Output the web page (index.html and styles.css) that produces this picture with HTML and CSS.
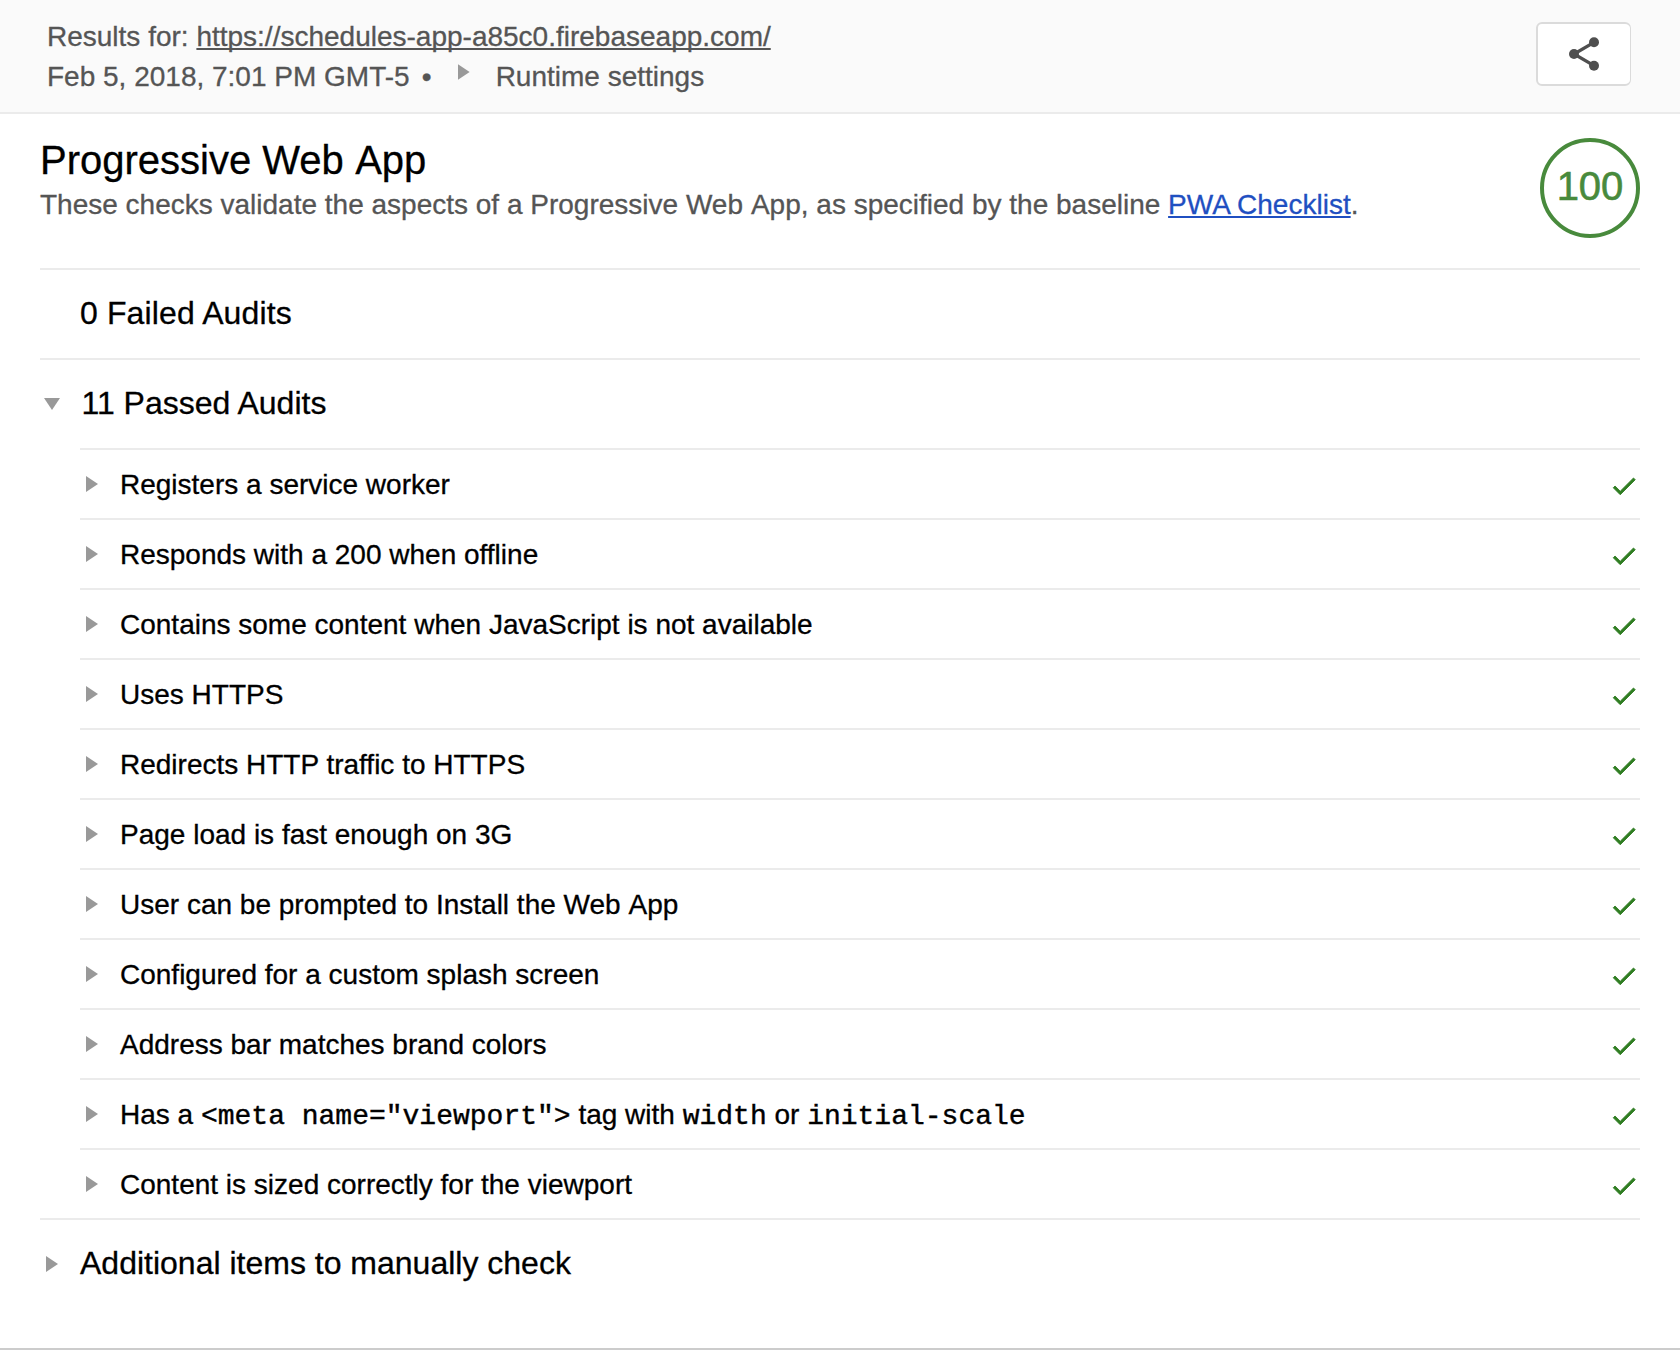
FILE: index.html
```html
<!DOCTYPE html>
<html lang="en">
<head>
<meta charset="utf-8">
<title>Audit report</title>
<link rel="stylesheet" href="styles.css">
</head>
<body>
<svg class="defs" width="0" height="0" aria-hidden="true">
  <symbol id="check" viewBox="0 0 24 24"><path d="M9 16.17L4.83 12l-1.42 1.41L9 19 21 7l-1.41-1.41z"/></symbol>
</svg>
<header class="header">
  <div class="meta">
    <div class="meta-line"><span class="t-results">Results for: <a class="url" href="#">https://schedules-app-a85c0.firebaseapp.com/</a></span></div>
    <div class="meta-line"><span class="t-date">Feb 5, 2018, 7:01 PM GMT-5</span><span class="dot">•</span><i class="tri tri-head"></i><span class="t-runtime">Runtime settings</span></div>
  </div>
  <button class="share" aria-label="Share"><svg width="40" height="40" viewBox="0 0 24 24"><path class="share-line" d="M18 5L6 12l12 7"/><circle cx="18" cy="5" r="3"/><circle cx="6" cy="12" r="3"/><circle cx="18" cy="19" r="3"/></svg></button>
</header>
<main class="category">
  <div class="category-head">
    <div class="category-text">
      <h1 class="title">Progressive Web <span class="word">App</span></h1>
      <p class="desc">These checks validate the aspects of a Progressive Web <span class="word">App</span>, as specified by the baseline <a class="link" href="#">PWA Checklist</a>.</p>
    </div>
    <div class="gauge">100</div>
  </div>
  <section class="group"><h2 class="group-title failed">0 Failed Audits</h2></section>
  <section class="group">
    <h2 class="group-title"><i class="tri tri-down"></i><span class="t-passed">11 Passed Audits</span></h2>
    <ul class="audits">
      <li class="audit"><i class="tri"></i><span class="name">Registers a service worker</span><svg class="check"><use href="#check"/></svg></li>
      <li class="audit"><i class="tri"></i><span class="name">Responds with a 200 when offline</span><svg class="check"><use href="#check"/></svg></li>
      <li class="audit"><i class="tri"></i><span class="name">Contains some content when JavaScript is not available</span><svg class="check"><use href="#check"/></svg></li>
      <li class="audit"><i class="tri"></i><span class="name">Uses HTTPS</span><svg class="check"><use href="#check"/></svg></li>
      <li class="audit"><i class="tri"></i><span class="name">Redirects HTTP traffic to HTTPS</span><svg class="check"><use href="#check"/></svg></li>
      <li class="audit"><i class="tri"></i><span class="name">Page load is fast enough on 3G</span><svg class="check"><use href="#check"/></svg></li>
      <li class="audit"><i class="tri"></i><span class="name">User can be prompted to Install the Web <span class="word">App</span></span><svg class="check"><use href="#check"/></svg></li>
      <li class="audit"><i class="tri"></i><span class="name">Configured for a custom splash screen</span><svg class="check"><use href="#check"/></svg></li>
      <li class="audit"><i class="tri"></i><span class="name">Address bar matches brand colors</span><svg class="check"><use href="#check"/></svg></li>
      <li class="audit"><i class="tri"></i><span class="name">Has a <code>&lt;meta name="viewport"&gt;</code> tag with <code>width</code> or <code>initial-scale</code></span><svg class="check"><use href="#check"/></svg></li>
      <li class="audit"><i class="tri"></i><span class="name">Content is sized correctly for the viewport</span><svg class="check"><use href="#check"/></svg></li>
    </ul>
  </section>
  <section class="group"><h2 class="group-title"><i class="tri tri-group"></i><span class="t-manual">Additional items to manually check</span></h2></section>
</main>
<footer class="end"></footer>
</body>
</html>
```
FILE: styles.css
```css
* { box-sizing: border-box; }
body { margin: 0; background: #fff; color: #000; font: 28px/40px "Liberation Sans", Arial, sans-serif; -webkit-text-stroke: .3px currentColor; overflow: hidden; }
h1, h2, p, ul { margin: 0; padding: 0; font-weight: 400; }
.defs { display: none; }
.header { display: flex; justify-content: space-between; height: 114px; padding: 17px 49px 0 47px; background: #fafafa; border-bottom: 2px solid #ebebeb; color: #555; }
.meta-line { display: flex; align-items: flex-start; height: 40px; white-space: nowrap; }
.url { color: inherit; text-decoration-thickness: 2px; text-underline-offset: 2px; text-decoration-skip-ink: none; }
.dot { margin-left: 12px; width: 36px; }
.tri { flex: none; width: 12px; height: 16px; background: #999; clip-path: polygon(0 0, 100% 50%, 0 100%); }
.tri-head { margin: 7px 26px 0 0; }
.share { display: flex; align-items: center; justify-content: center; width: 95px; height: 64px; margin-top: 5px; padding: 0; background: #fff; border: 2px solid #dbdbdb; border-right-width: 1px; border-radius: 6px; fill: #4f4f4f; }
.share-line { fill: none; stroke: #4f4f4f; stroke-width: 2; }
.category { padding: 0 40px; }
.category-head { display: flex; justify-content: space-between; height: 154px; padding-top: 24px; }
.title { font-size: 40px; line-height: 44px; white-space: nowrap; }
.desc { padding-top: 1px; color: #555; line-height: 44px; white-space: nowrap; }
.word { margin-left: .2px; }
.link { color: #1f4fc1; text-decoration-thickness: 2px; text-underline-offset: 2px; }
.gauge { width: 100px; height: 100px; border: 4px solid #488a3c; border-radius: 50%; color: #488a3c; font-size: 40px; line-height: 88px; text-align: center; -webkit-text-stroke-width: .6px; }
.group { border-top: 2px solid #ebebeb; }
.group-title { display: flex; align-items: center; height: 88px; font-size: 32px; line-height: 40px; }
.failed { padding: 0 0 2px 40px; letter-spacing: .13px; }
.t-passed, .t-manual { padding-bottom: 2px; }
.t-passed { padding-left: 1.5px; }
.tri-down { width: 16px; height: 12px; margin: 0 20px 0 4px; clip-path: polygon(0 0, 100% 0, 50% 100%); }
.tri-group { margin: 0 22px 0 6px; }
.audits { margin-left: 40px; list-style: none; }
.audit { display: flex; align-items: center; height: 70px; padding: 0 1px 0 6px; border-top: 2px solid #ebebeb; }
.name { margin-left: 22px; padding-top: 2px; white-space: nowrap; }
.check { width: 30px; height: 30px; margin: 4px 0 0 auto; fill: #2f7d22; stroke: #2f7d22; stroke-width: .7; }
code { font: 28px/1 "Liberation Mono", "Courier New", monospace; -webkit-text-stroke-width: .4px; }
.end { margin-top: 40px; border-top: 2px solid #ccc; }
```
